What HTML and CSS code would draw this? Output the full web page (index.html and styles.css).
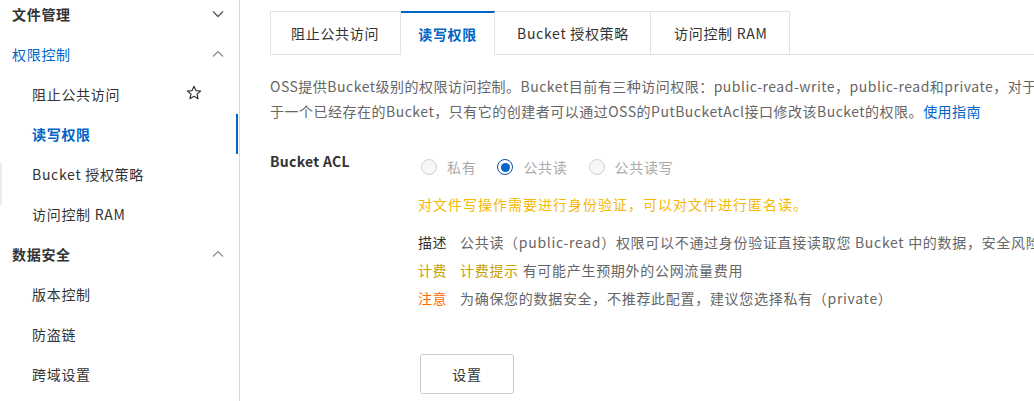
FILE: index.html
```html
<!DOCTYPE html>
<html lang="zh-CN">
<head>
<meta charset="utf-8">
<title>读写权限</title>
<link rel="stylesheet" href="styles.css">
</head>
<body>
<div class="page">
  <aside class="sidebar">
    <div class="group-title">文件管理
      <svg class="chev" viewBox="0 0 12 8" width="12" height="8"><path d="M1 1.5 L6 6.5 L11 1.5" fill="none" stroke="#555" stroke-width="1.3"/></svg>
    </div>
    <div class="group-title active-group">权限控制
      <svg class="chev" viewBox="0 0 12 8" width="12" height="8"><path d="M1 6.5 L6 1.5 L11 6.5" fill="none" stroke="#888" stroke-width="1.2"/></svg>
    </div>
    <div class="item">阻止公共访问
      <svg class="star" viewBox="0 0 16 16" width="16" height="16"><path d="M8 1.3 L9.9 5.6 L14.6 6 L11 9.1 L12.1 13.7 L8 11.3 L3.9 13.7 L5 9.1 L1.4 6 L6.1 5.6 Z" fill="none" stroke="#333" stroke-width="1.2" stroke-linejoin="round"/></svg>
    </div>
    <div class="item current">读写权限</div>
    <div class="item hovered">Bucket 授权策略</div>
    <div class="item">访问控制 RAM</div>
    <div class="group-title">数据安全
      <svg class="chev" viewBox="0 0 12 8" width="12" height="8"><path d="M1 6.5 L6 1.5 L11 6.5" fill="none" stroke="#888" stroke-width="1.2"/></svg>
    </div>
    <div class="item">版本控制</div>
    <div class="item">防盗链</div>
    <div class="item">跨域设置</div>
  </aside>
  <main class="main">
    <nav class="tabs">
      <div class="tab">阻止公共访问</div>
      <div class="tab active">读写权限</div>
      <div class="tab tab-policy">Bucket 授权策略</div>
      <div class="tab tab-ram">访问控制 RAM</div>
      <div class="tab-fill"></div>
    </nav>
    <p class="intro"><span class="line">OSS提供Bucket级别的权限访问控制。Bucket目前有三种访问权限：public-read-write，public-read和private，对于public-read-write权限，任何人都可以对该Bucket进行读写操作。对</span><span class="line">于一个已经存在的Bucket，只有它的创建者可以通过OSS的PutBucketAcl接口修改该Bucket的权限。<a class="link" href="#">使用指南</a></span></p>
    <div class="form-row">
      <div class="form-label">Bucket ACL</div>
      <div class="form-control">
        <div class="radios">
          <label class="radio"><span class="dot"></span>私有</label>
          <label class="radio checked"><span class="dot"></span>公共读</label>
          <label class="radio"><span class="dot"></span>公共读写</label>
        </div>
        <div class="warn">对文件写操作需要进行身份验证，可以对文件进行匿名读。</div>
        <div class="info">
          <div class="info-row"><span class="tag tag-desc">描述</span><span class="txt">公共读（public-read）权限可以不通过身份验证直接读取您 Bucket 中的数据，安全风险较高，为确保您的数据安全，不推荐此配置。</span></div>
          <div class="info-row"><span class="tag tag-fee">计费</span><span class="txt"><span class="fee">计费提示</span> 有可能产生预期外的公网流量费用</span></div>
          <div class="info-row"><span class="tag tag-note">注意</span><span class="txt">为确保您的数据安全，不推荐此配置，建议您选择私有（private）</span></div>
        </div>
        <button class="btn" type="button">设置</button>
      </div>
    </div>
  </main>
</div>
</body>
</html>
```

FILE: styles.css
```css
* { box-sizing: border-box; }
html, body { margin: 0; padding: 0; background: #fff; }
body {
  width: 1034px;
  height: 401px;
  overflow: hidden;
  font-family: "Noto Sans CJK SC", "Noto Sans", sans-serif;
  font-size: 14px;
  letter-spacing: 0.7px;
  color: #333;
}
.page { display: flex; height: 401px; }

.sidebar {
  width: 240px;
  flex: none;
  border-right: 1px solid #d9d9d9;
  margin-top: -6px;
  height: 407px;
}
.group-title, .item {
  height: 40px;
  display: flex;
  align-items: center;
  position: relative;
}
.group-title {
  padding-left: 12px;
  font-weight: 700;
  color: #333;
}
.active-group { color: #0064c8; font-weight: 400; }
.chev { position: absolute; left: 212px; top: 16px; }
.item { padding-left: 32px; color: #333; }
.star { position: absolute; left: 186px; top: 11px; }
.item.current { color: #0064c8; font-weight: 700; }
.item.current::after {
  content: "";
  position: absolute;
  right: 1px;
  top: 0;
  width: 2px;
  height: 40px;
  background: #0064c8;
}
.item.hovered::before {
  content: "";
  position: absolute;
  left: 0;
  top: 9px;
  width: 2px;
  height: 42px;
  background: #ececec;
}

.main {
  flex: 1;
  min-width: 0;
  padding: 11px 0 0 30px;
  overflow: hidden;
}
.tabs { display: flex; height: 44px; }
.tab {
  height: 44px;
  padding: 0 19px 0 20px;
  display: flex;
  align-items: center;
  border: 1px solid #e3e3e3;
  border-left: none;
  color: #333;
  white-space: nowrap;
  background: #fff;
}
.tab:first-child { border-left: 1px solid #e3e3e3; padding: 0 21px 0 20px; }
.tab.active {
  color: #0064c8;
  font-weight: 700;
  border-top: 2px solid #0064c8;
  border-bottom-color: transparent;
  padding: 0 17px;
}
.tab.tab-policy { padding: 0 21px 0 22px; }
.tab.tab-ram { padding: 0 22px 0 23px; }
.tab-fill { flex: 1; border-bottom: 1px solid #e3e3e3; }

.intro {
  margin: 19px 0 0;
  line-height: 25px;
  color: #666;
  white-space: nowrap;
  letter-spacing: 0.5px;
}
.intro .line { display: block; }
.link { color: #0064c8; text-decoration: none; }

.form-row { display: flex; margin-top: 26px; }
.form-label {
  width: 148px;
  flex: none;
  font-weight: 700;
  color: #333;
  line-height: 22px;
  letter-spacing: 0.3px;
}
.form-control { flex: 1; min-width: 0; padding-top: 6px; }
.radios { display: flex; height: 22px; align-items: center; }
.radio {
  display: flex;
  align-items: center;
  color: #aaa;
  margin-right: 18px;
  white-space: nowrap;
}
.dot {
  width: 16px;
  height: 16px;
  border-radius: 50%;
  border: 1px solid #cfd3d8;
  background: #f6f7f9;
  margin-right: 10px;
  margin-left: 3px;
  position: relative;
}
.radio.checked .dot {
  border: 1.5px solid #0a4d9a;
  background: #fff;
}
.radio.checked .dot::after {
  content: "";
  position: absolute;
  left: 50%;
  top: 50%;
  width: 9px;
  height: 9px;
  margin: -4.5px 0 0 -4.5px;
  border-radius: 50%;
  background: #0064c8;
}
.warn {
  margin-top: 16px;
  color: #f5b800;
  line-height: 20px;
  white-space: nowrap;
  letter-spacing: 1px;
}
.info { margin-top: 14px; }
.info-row {
  display: flex;
  line-height: 28px;
  white-space: nowrap;
}
.tag { width: 42px; flex: none; letter-spacing: 0.5px; }
.tag-desc { color: #333; }
.tag-fee { color: #c8a000; }
.tag-note { color: #ff6a00; }
.txt { color: #666; }
.fee { color: #c8a000; }

.btn {
  margin-top: 42px;
  margin-left: 2px;
  width: 94px;
  height: 40px;
  border: 1px solid #c8cbd0;
  border-radius: 3px;
  background: #fff;
  color: #333;
  font-family: "Noto Sans CJK SC", "Noto Sans", sans-serif;
  font-size: 14px;
  letter-spacing: 0.7px;
  cursor: pointer;
}
```
